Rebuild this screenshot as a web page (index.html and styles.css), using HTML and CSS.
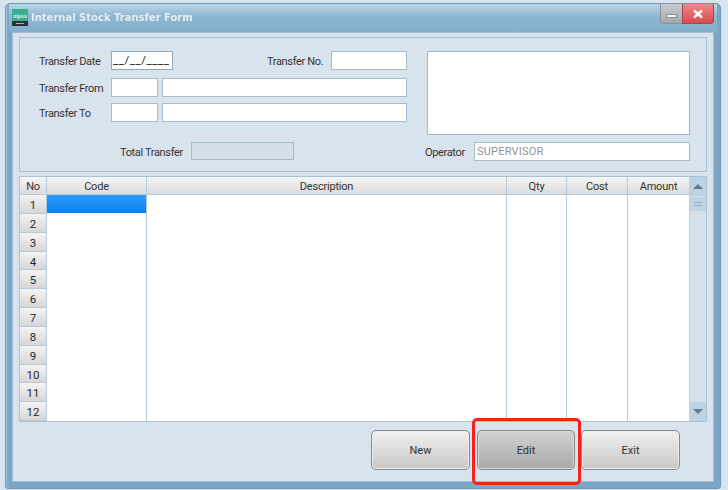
FILE: index.html
```html
<!DOCTYPE html>
<html lang="en">
<head>
<meta charset="utf-8">
<title>Internal Stock Transfer Form</title>
<link rel="stylesheet" href="styles.css">
</head>
<body>
<div class="window">
  <div class="titlebar">
    <svg class="app-icon" width="16" height="17" viewBox="0 0 16 17"><rect width="16" height="12" fill="#35b090"/><rect y="12" width="16" height="5" fill="#2a3338"/><text x="8" y="8.5" text-anchor="middle" class="icon-text">nlpos</text><rect x="4" y="14" width="8" height="1" fill="#aab4b8"/></svg>
    <div class="title">Internal Stock Transfer Form</div>
    <div class="caption-buttons">
      <div class="cap-btn cap-min"><span class="min-glyph"></span></div>
      <div class="cap-btn cap-close"><svg width="12" height="10" viewBox="0 0 12 10"><path d="M2 1.5 L10 8.5 M10 1.5 L2 8.5" stroke="#fff" stroke-width="2.4" fill="none"/></svg></div>
    </div>
  </div>
  <div class="client">
    <div class="panel">
      <div class="fields">
        <div class="frow r1">
          <label class="lbl lbl-main">Transfer Date</label>
          <div class="input date">__/__/____</div>
          <label class="lbl lbl-no">Transfer No.</label>
          <div class="input no-input"></div>
        </div>
        <div class="frow r2">
          <label class="lbl lbl-main">Transfer From</label>
          <div class="input code-input"></div>
          <div class="input name-input"></div>
        </div>
        <div class="frow r3">
          <label class="lbl lbl-main">Transfer To</label>
          <div class="input code-input"></div>
          <div class="input name-input"></div>
        </div>
        <div class="frow r4">
          <label class="lbl lbl-total">Total Transfer</label>
          <div class="input total-input"></div>
        </div>
      </div>
      <div class="side">
        <div class="input memo"></div>
        <div class="frow op-row">
          <label class="lbl lbl-op">Operator</label>
          <div class="input op-input">SUPERVISOR</div>
        </div>
      </div>
    </div>
    <div class="grid">
      <div class="col col-no">
        <div class="hd">No</div>
        <div class="rh">1</div><div class="rh">2</div><div class="rh">3</div><div class="rh">4</div>
        <div class="rh">5</div><div class="rh">6</div><div class="rh">7</div><div class="rh">8</div>
        <div class="rh">9</div><div class="rh">10</div><div class="rh">11</div><div class="rh">12</div>
      </div>
      <div class="col col-code"><div class="hd">Code</div><div class="sel"></div></div>
      <div class="col col-desc"><div class="hd">Description</div></div>
      <div class="col col-qty"><div class="hd">Qty</div></div>
      <div class="col col-cost"><div class="hd">Cost</div></div>
      <div class="col col-amt"><div class="hd">Amount</div></div>
      <div class="scrollbar">
        <div class="sb-btn"><span class="arrow-up"></span></div>
        <div class="sb-thumb"><span class="grip"></span></div>
        <div class="sb-track"></div>
        <div class="sb-btn sb-down"><span class="arrow-down"></span></div>
      </div>
    </div>
    <div class="actions">
      <button class="btn">New</button>
      <button class="btn btn-active">Edit</button>
      <button class="btn btn-exit">Exit</button>
    </div>
  </div>
</div>
<div class="highlight"></div>
</body>
</html>
```
FILE: styles.css
```css
* { box-sizing: border-box; }
html, body { margin: 0; padding: 0; }
body {
  position: relative;
  width: 728px;
  height: 490px;
  overflow: hidden;
  background: #d8e5f0;
  padding: 3px 7px 0 5px;
  font-family: Roboto, "Liberation Sans", sans-serif;
  font-size: 11px;
  color: #333;
}
.window {
  width: 716px;
  height: 486px;
  background: #7ba6c7;
  border: 1px solid #6f98b8;
  border-radius: 5px 5px 3px 3px;
  padding: 0 6px 6px 6px;
  box-shadow: inset 1px 0 0 #a8c6dc;
  filter: blur(0.35px);
}
.titlebar {
  height: 28px;
  display: flex;
  align-items: center;
  margin: 0 -3px;
  padding: 0 0 0 3px;
  background: linear-gradient(#bcd5e6, #8db6d1 45%, #84afcc);
}
.app-icon { margin: -2px 0 0 0; flex: none; }
.icon-text { font-family: "Liberation Sans", sans-serif; font-size: 5px; font-weight: bold; fill: #e4f5ee; }
.title {
  margin: -2px 0 0 3px;
  font-family: "DejaVu Sans", sans-serif;
  font-weight: bold;
  font-size: 10px;
  color: #e4eff6;
  flex: 1;
}
.caption-buttons { display: flex; align-self: flex-start; margin-right: 3px; }
.cap-btn {
  height: 20px;
  display: flex;
  align-items: center;
  justify-content: center;
  border: 1px solid #8a8f93;
  border-top: none;
}
.cap-min {
  width: 22px;
  background: linear-gradient(#c8cccf, #a4a8ab);
  border-radius: 0 0 0 4px;
  border-right: none;
}
.cap-close {
  width: 32px;
  background: linear-gradient(#ef8a8a, #d94a4f);
  border-color: #a84548;
  border-radius: 0 0 4px 0;
}
.min-glyph { width: 11px; height: 4px; background: #eef0f1; border: 1px solid #8f9396; margin-top: 4px; }
.client {
  height: 450px;
  background: #d9e3ee;
  border: 1px solid #a3bfd4;
  padding: 4px 7px 0 6px;
}
.panel {
  width: 688px;
  height: 135px;
  border: 1px solid #a9c3d6;
  display: flex;
}
.fields { width: 406px; padding-top: 13px; padding-left: 19px; flex: none; }
.frow { display: flex; align-items: center; }
.r1, .r2, .r3 { height: 19px; }
.r2 { margin-top: 8px; }
.r3 { margin-top: 6px; }
.r4 { height: 18px; margin-top: 20px; }
.lbl { white-space: nowrap; padding-top: 2px; letter-spacing: -0.35px; }
.lbl-main { width: 72px; flex: none; }
.lbl-no { margin-left: 94px; width: 64px; flex: none; }
.lbl-total { margin-left: 81px; width: 71px; flex: none; }
.lbl-op { width: 49px; flex: none; }
.input {
  height: 19px;
  background: #fff;
  border: 1px solid #a7bccb;
  flex: none;
}
.date {
  width: 62px;
  border-color: #8fa9bd;
  font-size: 11.5px;
  line-height: 17px;
  padding-left: 1px;
  color: #222;
  letter-spacing: 0.55px;
}
.no-input { width: 76px; }
.code-input { width: 47px; }
.name-input { width: 245px; margin-left: 4px; }
.total-input { width: 103px; height: 18px; background: #d3dfe9; border-color: #a3bccd; }
.side { width: 263px; margin-left: 1px; padding-top: 13px; flex: none; }
.memo { width: 263px; height: 84px; border-color: #a3b8c7; }
.op-row { margin-top: 7px; margin-left: -2px; }
.op-input {
  width: 216px;
  height: 19px;
  font-size: 11px;
  line-height: 18px;
  padding-left: 2px;
  color: #8d9499;
  letter-spacing: 0.2px;
}
.grid {
  width: 688px;
  height: 246px;
  margin-top: 4px;
  border: 1px solid #a9c3d6;
  background: #fff;
  display: flex;
}
.col { flex: none; border-right: 1px solid #b4cce0; }
.col-no { width: 27px; background: #d9e3ee; }
.col-code { width: 100px; }
.col-desc { width: 360px; }
.col-qty { width: 60px; }
.col-cost { width: 61px; }
.col-amt { width: 61px; border-right: none; }
.hd {
  height: 18px;
  text-align: center;
  line-height: 19px;
  letter-spacing: -0.2px;
  background: linear-gradient(#f6f6f6, #dcdcdc);
  border-bottom: 1px solid #b4cce0;
  color: #333;
}
.rh {
  height: 18.85px;
  text-align: center;
  line-height: 20px;
  background: linear-gradient(#f4f4f4, #d6d6d6);
  border-bottom: 1px solid #b4c8d8;
  font-size: 11.5px;
  color: #2a2a2a;
}
.sel { height: 18px; background: linear-gradient(#2c9cfb, #0a7fee); }
.scrollbar {
  width: 17px;
  margin-left: 0;
  background: #d4e0ea;
  border-left: 1px solid #c0d2e0;
  display: flex;
  flex-direction: column;
  flex: none;
}
.sb-btn {
  height: 19px;
  flex: none;
  display: flex;
  align-items: center;
  justify-content: center;
  background: #bdd2e2;
}
.sb-thumb {
  height: 15px;
  flex: none;
  display: flex;
  align-items: center;
  justify-content: center;
  background: #bfd3e3;
  border-top: 1px solid #d4e0ea;
}
.grip { width: 8px; height: 4px; border-top: 1px solid #94aec2; border-bottom: 1px solid #94aec2; }
.sb-track { flex: 1; }
.arrow-up { border: 5px solid transparent; border-top: none; border-bottom: 5px solid #66788a; }
.arrow-down { border: 5px solid transparent; border-bottom: none; border-top: 5px solid #66788a; }
.actions {
  display: flex;
  gap: 7px;
  padding: 8px 0 0 352px;
}
.btn {
  width: 99px;
  height: 40px;
  border: 1px solid #85898c;
  border-radius: 5px;
  background: linear-gradient(#f0f0f0, #c8c8c8);
  box-shadow: inset 0 0 0 1px #eeeeee;
  font: inherit;
  color: #333;
  padding: 0;
}
.btn-active {
  width: 98px;
  background: linear-gradient(#d2d2d2, #a9a9a9);
  box-shadow: inset 0 0 0 1px #dadada;
}
.btn-exit { margin-left: -1px; }
.highlight {
  position: absolute;
  left: 472px;
  top: 418px;
  width: 109px;
  height: 67px;
  border: 3px solid #f5221c;
  border-radius: 5px;
}
```
